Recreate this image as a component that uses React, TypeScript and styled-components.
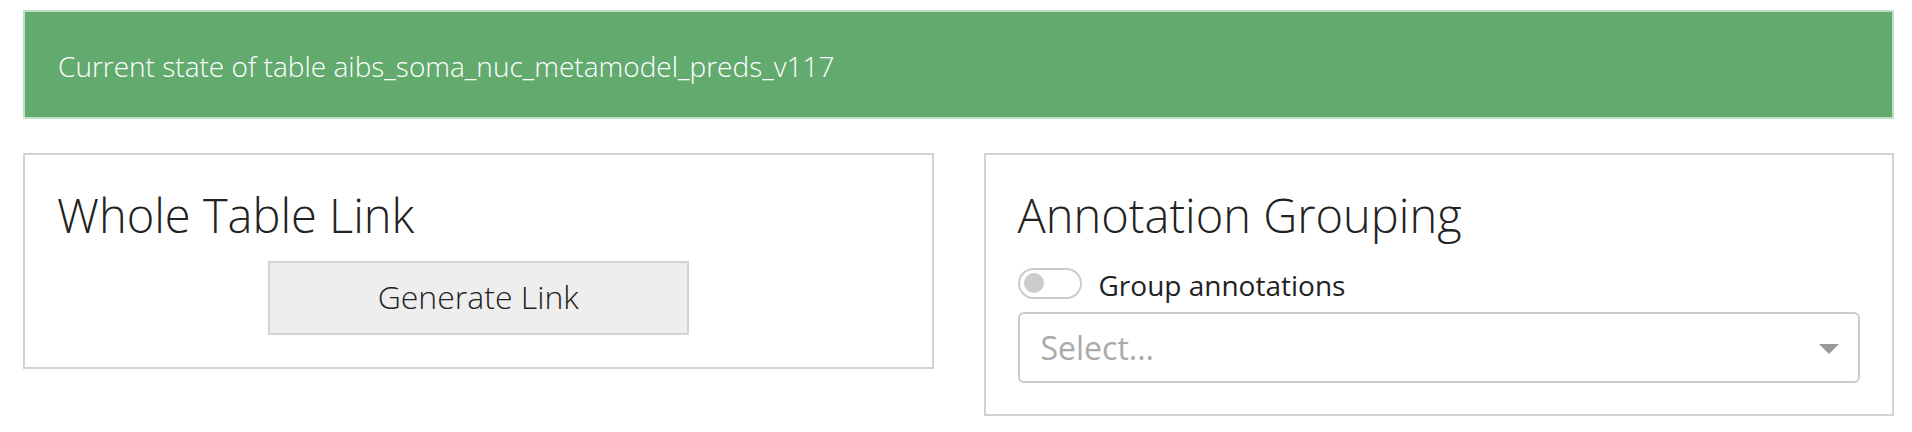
import React from "react";
import styled, { createGlobalStyle } from "styled-components";

const Global = createGlobalStyle`
  html, body { margin: 0; padding: 0; background: #ffffff; }
  body { font-family: "Open Sans", "Liberation Sans", sans-serif; color: #222; }
  * { box-sizing: border-box; }
`;

const Page = styled.div`
  padding: 10px 18px 0 23px;
`;

const Banner = styled.div`
  height: 109px;
  display: flex;
  align-items: center;
  padding: 2px 0 0 33px;
  background: #63aa6f;
  border: 2px solid #c0e1c5;
  color: #ffffff;
  font-weight: 300;
  font-size: 28px;
`;

const Row = styled.div`
  margin-top: 34px;
  display: grid;
  grid-template-columns: 1fr 1fr;
  column-gap: 50px;
  align-items: start;
`;

const Card = styled.section<{ $bottom: number }>`
  border: 2px solid #d3d3d3;
  padding: 31px 32px ${(p) => p.$bottom}px;
  display: flex;
  flex-direction: column;
`;

const Heading = styled.h3`
  margin: 0;
  font-size: 47px;
  line-height: 58px;
  font-weight: 300;
  color: #222;
`;

const Button = styled.button`
  align-self: center;
  margin-top: 17px;
  width: 421px;
  height: 74px;
  padding: 0 0 4px;
  background: #eeeeee;
  border: 2px solid #d3d3d3;
  font-family: inherit;
  font-weight: 300;
  font-size: 32px;
  color: #222;
`;

const ToggleRow = styled.label`
  margin-top: 18px;
  display: flex;
  align-items: center;
  gap: 17px;
  font-size: 28px;
  color: #222;
`;

const ToggleText = styled.span`
  padding-top: 4px;
`;

const Track = styled.span`
  width: 64px;
  height: 31px;
  border: 2px solid #cccccc;
  border-radius: 16px;
  display: flex;
  align-items: center;
  padding-left: 4px;
`;

const Knob = styled.span`
  width: 20px;
  height: 20px;
  border-radius: 50%;
  background: #cccccc;
`;

const Select = styled.div`
  margin-top: 7.5px;
  height: 71px;
  border: 2px solid #cccccc;
  border-radius: 6px;
  display: flex;
  align-items: center;
  justify-content: space-between;
  padding: 0 19px 0 21px;
`;

const Placeholder = styled.span`
  font-size: 32px;
  color: #aaaaaa;
`;

const Caret = styled.span`
  margin-top: 4px;
  width: 0;
  height: 0;
  border-left: 10px solid transparent;
  border-right: 10px solid transparent;
  border-top: 10px solid #999999;
`;

export default function App() {
  return (
    <>
      <Global />
      <Page>
        <Banner>Current state of table aibs_soma_nuc_metamodel_preds_v117</Banner>
        <Row>
          <Card $bottom={32}>
            <Heading>Whole Table Link</Heading>
            <Button type="button">Generate Link</Button>
          </Card>
          <Card $bottom={31}>
            <Heading>Annotation Grouping</Heading>
            <ToggleRow>
              <Track>
                <Knob />
              </Track>
              <ToggleText>Group annotations</ToggleText>
            </ToggleRow>
            <Select>
              <Placeholder>Select...</Placeholder>
              <Caret />
            </Select>
          </Card>
        </Row>
      </Page>
    </>
  );
}
